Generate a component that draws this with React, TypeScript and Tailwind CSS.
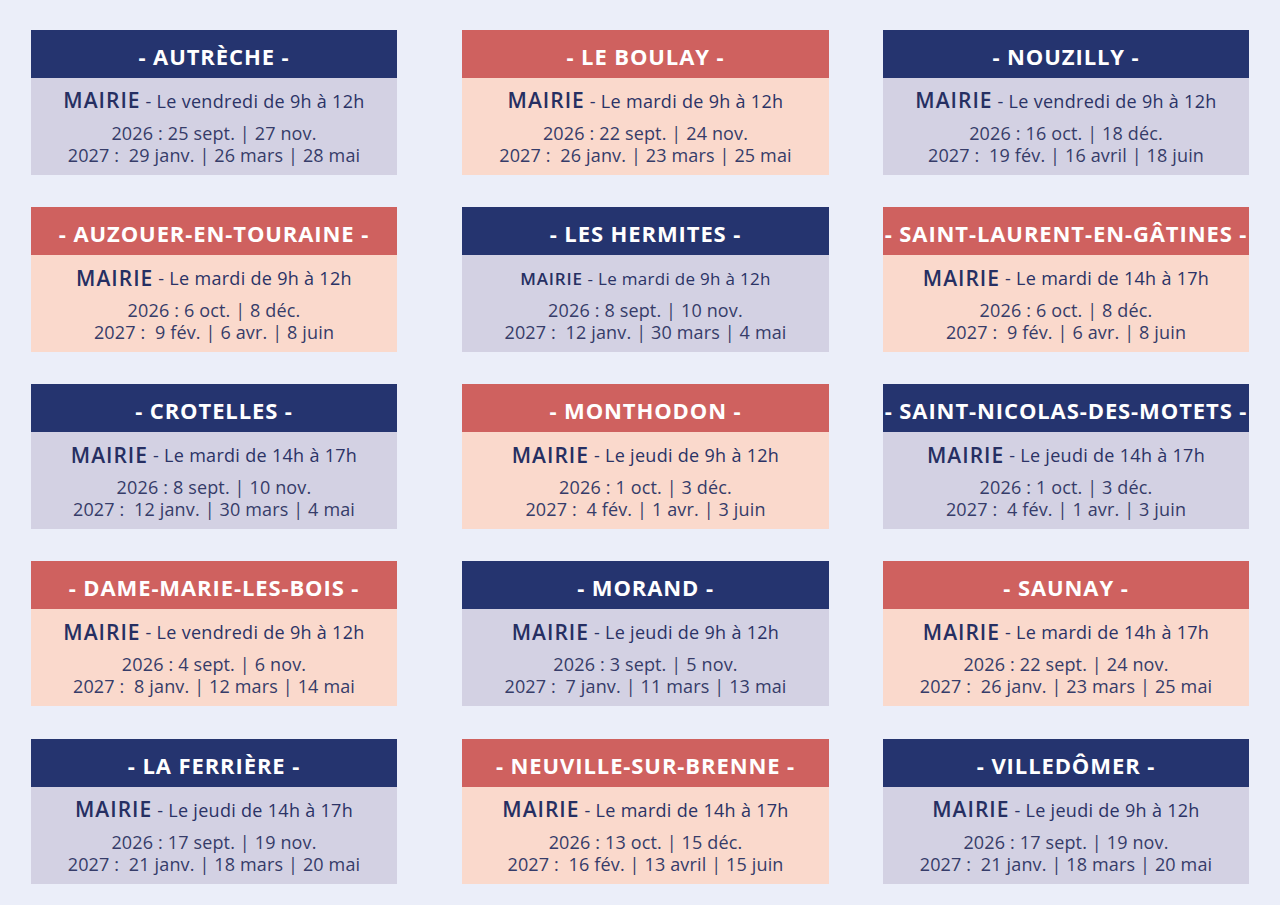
import React from 'react';

type Commune = {
  name: string;
  tone: 'navy' | 'red';
  hours: string;
  y2026: string;
  y2027: string;
  small?: boolean;
};

const rows: Commune[][] = [
  [
    { name: 'AUTRÈCHE', tone: 'navy', hours: 'Le vendredi de 9h à 12h', y2026: '25 sept. | 27 nov.', y2027: '29 janv. | 26 mars | 28 mai' },
    { name: 'LE BOULAY', tone: 'red', hours: 'Le mardi de 9h à 12h', y2026: '22 sept. | 24 nov.', y2027: '26 janv. | 23 mars | 25 mai' },
    { name: 'NOUZILLY', tone: 'navy', hours: 'Le vendredi de 9h à 12h', y2026: '16 oct. | 18 déc.', y2027: '19 fév. | 16 avril | 18 juin' },
  ],
  [
    { name: 'AUZOUER-EN-TOURAINE', tone: 'red', hours: 'Le mardi de 9h à 12h', y2026: '6 oct. | 8 déc.', y2027: '9 fév. | 6 avr. | 8 juin' },
    { name: 'LES HERMITES', tone: 'navy', hours: 'Le mardi de 9h à 12h', y2026: '8 sept. | 10 nov.', y2027: '12 janv. | 30 mars | 4 mai', small: true },
    { name: 'SAINT-LAURENT-EN-GÂTINES', tone: 'red', hours: 'Le mardi de 14h à 17h', y2026: '6 oct. | 8 déc.', y2027: '9 fév. | 6 avr. | 8 juin' },
  ],
  [
    { name: 'CROTELLES', tone: 'navy', hours: 'Le mardi de 14h à 17h', y2026: '8 sept. | 10 nov.', y2027: '12 janv. | 30 mars | 4 mai' },
    { name: 'MONTHODON', tone: 'red', hours: 'Le jeudi de 9h à 12h', y2026: '1 oct. | 3 déc.', y2027: '4 fév. | 1 avr. | 3 juin' },
    { name: 'SAINT-NICOLAS-DES-MOTETS', tone: 'navy', hours: 'Le jeudi de 14h à 17h', y2026: '1 oct. | 3 déc.', y2027: '4 fév. | 1 avr. | 3 juin' },
  ],
  [
    { name: 'DAME-MARIE-LES-BOIS', tone: 'red', hours: 'Le vendredi de 9h à 12h', y2026: '4 sept. | 6 nov.', y2027: '8 janv. | 12 mars | 14 mai' },
    { name: 'MORAND', tone: 'navy', hours: 'Le jeudi de 9h à 12h', y2026: '3 sept. | 5 nov.', y2027: '7 janv. | 11 mars | 13 mai' },
    { name: 'SAUNAY', tone: 'red', hours: 'Le mardi de 14h à 17h', y2026: '22 sept. | 24 nov.', y2027: '26 janv. | 23 mars | 25 mai' },
  ],
  [
    { name: 'LA FERRIÈRE', tone: 'navy', hours: 'Le jeudi de 14h à 17h', y2026: '17 sept. | 19 nov.', y2027: '21 janv. | 18 mars | 20 mai' },
    { name: 'NEUVILLE-SUR-BRENNE', tone: 'red', hours: 'Le mardi de 14h à 17h', y2026: '13 oct. | 15 déc.', y2027: '16 fév. | 13 avril | 15 juin' },
    { name: 'VILLEDÔMER', tone: 'navy', hours: 'Le jeudi de 9h à 12h', y2026: '17 sept. | 19 nov.', y2027: '21 janv. | 18 mars | 20 mai' },
  ],
];

function Card({ c, className }: { c: Commune; className?: string }) {
  const navy = c.tone === 'navy';
  return (
    <div className={`flex h-[145px] flex-col ${className ?? ''}`}>
      <div
        className={`flex h-[48px] items-center justify-center whitespace-nowrap pt-[5px] text-[22px] font-bold tracking-[0.9px] text-white ${
          navy ? 'bg-[#25346f]' : 'bg-[#cf615f]'
        }`}
      >
        - {c.name} -
      </div>
      <div
        className={`flex flex-1 flex-col items-center pt-[10px] text-[#2b3366] ${
          navy ? 'bg-[#d3d1e3]' : 'bg-[#fad9cc]'
        }`}
      >
        <div className="flex h-[27px] items-center whitespace-nowrap">
          <span
            className={`font-semibold text-[#262f62] ${
              c.small ? 'text-[17px] tracking-[0.8px]' : 'text-[21px] tracking-[1px]'
            }`}
          >
            MAIRIE
          </span>
          <span className={`font-medium tracking-[0.3px] ${c.small ? 'text-[17px]' : 'text-[18px]'}`}>
            &nbsp;- {c.hours}
          </span>
        </div>
        <div className="mt-[7px] whitespace-pre text-center text-[18px] leading-[22px] tracking-[0.15px] text-[#363c69]">
          <div>2026 : {c.y2026}</div>
          <div>2027 :  {c.y2027}</div>
        </div>
      </div>
    </div>
  );
}

export default function App() {
  return (
    <div
      className="min-h-[905px] w-[1280px] bg-[#ebeef9] pl-[31px] pt-[29.5px]"
      style={{ fontFamily: '"Open Sans", "Noto Sans", sans-serif' }}
    >
      <div className="flex flex-col gap-y-[32.3px]">
        {rows.map((row, i) => (
          <div key={i} className="flex">
            <Card c={row[0]} className="w-[366px]" />
            <Card c={row[1]} className="ml-[65px] w-[367px]" />
            <Card c={row[2]} className="ml-[54px] w-[366px]" />
          </div>
        ))}
      </div>
    </div>
  );
}
